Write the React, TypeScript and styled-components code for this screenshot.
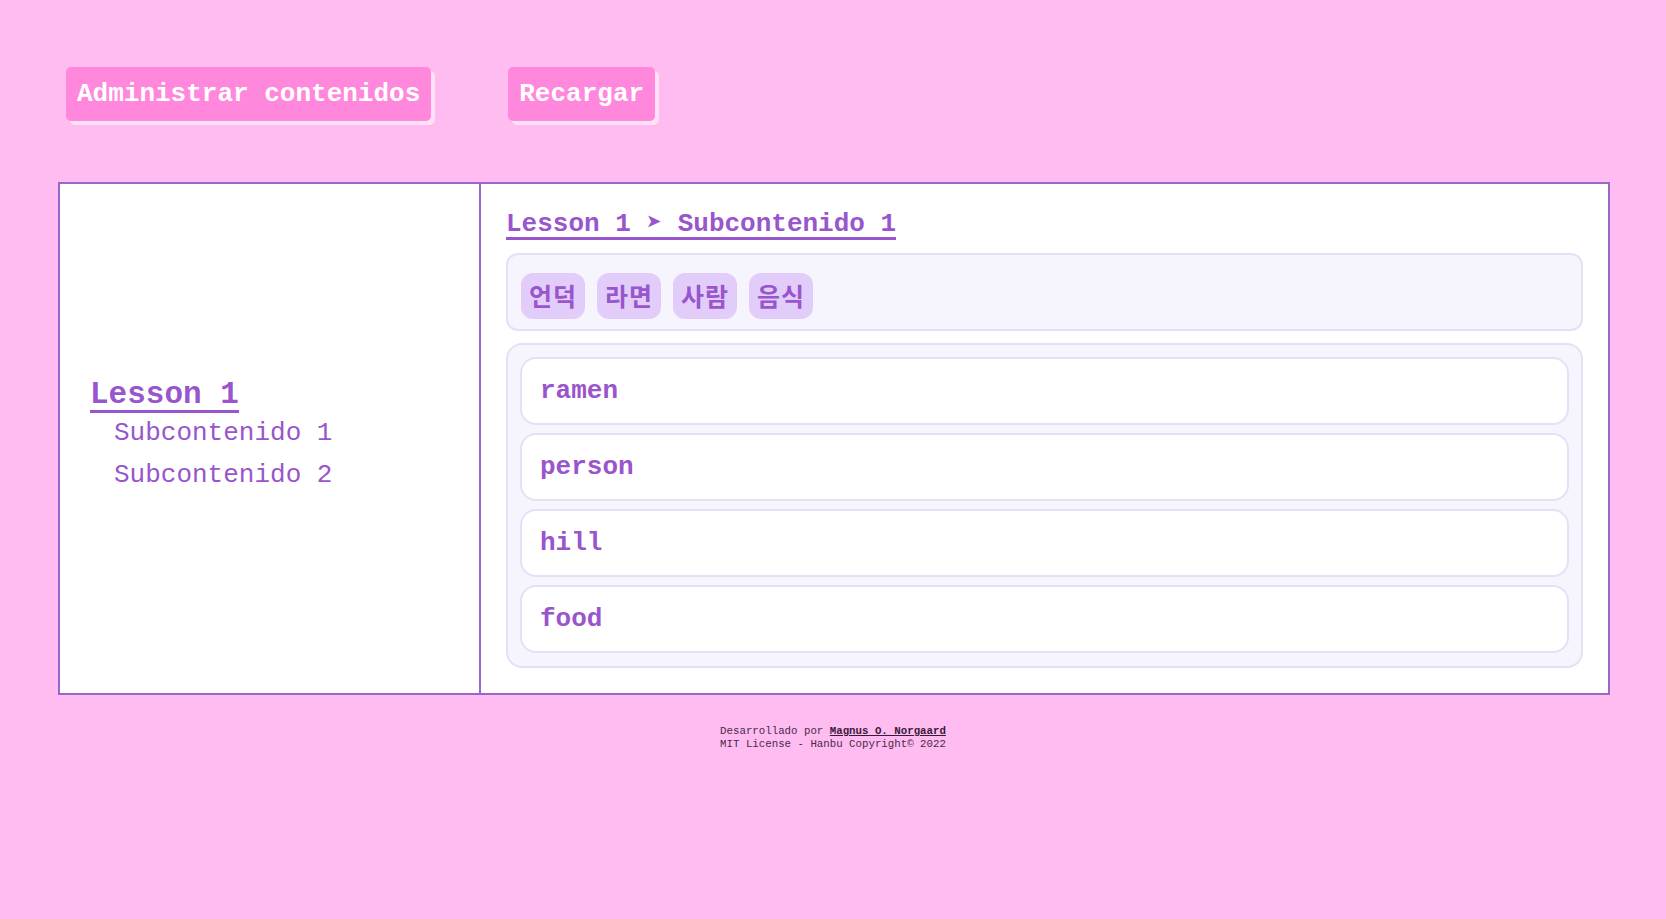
import React from "react";
import styled, { createGlobalStyle } from "styled-components";

const GlobalStyle = createGlobalStyle`
  html, body {
    margin: 0;
    padding: 0;
    background: #ffbcf0;
    font-family: "Liberation Mono", "Noto Sans CJK KR", monospace;
  }
  * { box-sizing: border-box; }
`;

const Page = styled.div`
  min-height: 919px;
  display: flex;
  flex-direction: column;
`;

const Toolbar = styled.div`
  display: flex;
  gap: 77px;
  padding: 67px 0 0 66px;
`;

const ActionButton = styled.button`
  height: 54px;
  padding: 0 11px;
  border: none;
  border-radius: 5px;
  background: #ff88dd;
  color: #ffffff;
  font-family: "Liberation Mono", monospace;
  font-size: 26px;
  font-weight: 700;
  box-shadow: 4px 4px 0 #ffe0f6;
  cursor: pointer;
`;

const Panel = styled.div`
  margin: 61px 56px 0 58px;
  height: 513px;
  border: 2px solid #9966cc;
  background: #ffffff;
  display: grid;
  grid-template-columns: 421px 1fr;
`;

const Sidebar = styled.nav`
  border-right: 2px solid #9966cc;
  display: flex;
  flex-direction: column;
  justify-content: center;
  padding: 0 0 2px 30px;
`;

const LessonTitle = styled.div`
  align-self: flex-start;
  font-size: 31px;
  line-height: 31px;
  font-weight: 700;
  color: #9955cc;
  border-bottom: 3px solid #9955cc;
  margin-bottom: -1px;
`;

const SubItem = styled.div`
  margin-left: 24px;
  font-size: 26px;
  line-height: 42px;
  color: #9955cc;
`;

const Content = styled.main`
  padding: 28px 25px 24px 25px;
  display: flex;
  flex-direction: column;
`;

const Breadcrumb = styled.div`
  align-self: flex-start;
  font-size: 26px;
  line-height: 25px;
  font-weight: 700;
  color: #9955cc;
  border-bottom: 3px solid #9955cc;
  margin-bottom: 13px;
`;

const TagBox = styled.div`
  display: flex;
  gap: 12px;
  height: 78px;
  padding: 18px 13px 10px;
  border: 2px solid #e4e0f6;
  border-radius: 12px;
  background: #f6f4fd;
`;

const Tag = styled.span`
  height: 46px;
  padding: 0 8px 3px;
  display: flex;
  align-items: center;
  border-radius: 12px;
  background: #e2cdfa;
  color: #9955cc;
  font-family: "Noto Sans CJK KR", "Liberation Mono", sans-serif;
  font-size: 25px;
  font-weight: 700;
  letter-spacing: 1px;
`;

const WordBox = styled.div`
  margin-top: 12px;
  display: flex;
  flex-direction: column;
  gap: 8px;
  padding: 12px 12px 13px;
  border: 2px solid #e4e0f6;
  border-radius: 16px;
  background: #f6f4fd;
`;

const WordItem = styled.div`
  height: 68px;
  display: flex;
  align-items: center;
  padding-left: 18px;
  border: 2px solid #e4e0f6;
  border-radius: 16px;
  background: #ffffff;
  color: #9955cc;
  font-size: 26px;
  font-weight: 700;
`;

const Footer = styled.footer`
  margin-top: 30px;
  text-align: center;
  font-size: 10.75px;
  line-height: 13px;
  color: #4a2a4a;
`;

const FooterLink = styled.a`
  color: #3a1a3a;
  font-weight: 700;
  text-decoration: underline;
`;

const tags = ["언덕", "라면", "사람", "음식"];
const words = ["ramen", "person", "hill", "food"];

export default function App() {
  return (
    <Page>
      <GlobalStyle />
      <Toolbar>
        <ActionButton>Administrar contenidos</ActionButton>
        <ActionButton>Recargar</ActionButton>
      </Toolbar>
      <Panel>
        <Sidebar>
          <LessonTitle>Lesson 1</LessonTitle>
          <SubItem>Subcontenido 1</SubItem>
          <SubItem>Subcontenido 2</SubItem>
        </Sidebar>
        <Content>
          <Breadcrumb>Lesson 1 ➤ Subcontenido 1</Breadcrumb>
          <TagBox>
            {tags.map((t) => (
              <Tag key={t}>{t}</Tag>
            ))}
          </TagBox>
          <WordBox>
            {words.map((w) => (
              <WordItem key={w}>{w}</WordItem>
            ))}
          </WordBox>
        </Content>
      </Panel>
      <Footer>
        <div>
          Desarrollado por <FooterLink href="#">Magnus O. Norgaard</FooterLink>
        </div>
        <div>MIT License - Hanbu Copyright© 2022</div>
      </Footer>
    </Page>
  );
}
